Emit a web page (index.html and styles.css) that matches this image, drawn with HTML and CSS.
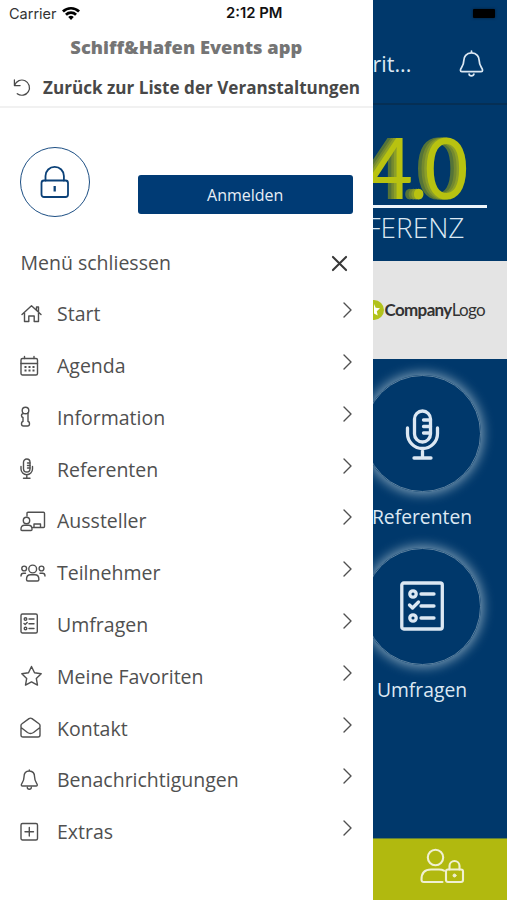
FILE: index.html
```html
<!DOCTYPE html>
<html lang="de">
<head>
<meta charset="utf-8">
<meta name="viewport" content="width=device-width">
<title>Schiff&amp;Hafen Events app</title>
<link rel="stylesheet" href="styles.css">
</head>
<body>
<div class="screen">
  <aside class="drawer">
    <div class="status">
      <span class="carrier">Carrier</span>
      <svg class="wifi" viewBox="0 0 18 14"><path d="M9 14 6.2 11.1a4 4 0 0 1 5.6 0ZM4.9 9.7 3 7.8a8.6 8.6 0 0 1 12 0l-1.900 1.900a5.900 5.900 0 0 0-8.200 0ZM1.900 6.500 0 4.600a12.900 12.900 0 0 1 18 0l-1.900 1.900a10.200 10.200 0 0 0-14.200 0Z"/></svg>
      <span class="time">2:12 PM</span>
    </div>
    <header class="head">
      <h1 class="title"><span>Schiff&amp;Hafen Events app</span></h1>
      <div class="back">
        <svg class="icon back-icon" viewBox="0 0 20 20"><path d="M2 2v6h6M2.300 7.500A8 8 0 1 1 5 16.500"/></svg>
        <span>Zurück zur Liste der Veranstaltungen</span>
      </div>
    </header>
    <section class="login">
      <div class="avatar"><svg class="icon" viewBox="0 0 30 34"><rect x="1.500" y="15.500" width="26.500" height="16.500" rx="2.500"/><path d="M5.500 15.500v-4.500a9.200 9.200 0 0 1 18.400 0v4.500"/><path class="keyhole" d="M14.700 21v5.500"/></svg></div>
      <button class="button">Anmelden</button>
    </section>
    <div class="close-row"><span>Menü schliessen</span><svg class="icon" viewBox="0 0 16 16"><path d="m1 1 14 14M15 1 1 15"/></svg></div>
    <nav class="menu">
      <a class="item"><svg class="icon" viewBox="0 0 26 24"><path d="m2 12.500 9.500-8.700 9.500 8.700M4.500 11v8.500h4.300V14h5.400v5.500h4.300V11M16.500 7.800V5h2v4.700"/></svg><span>Start</span><svg class="chev" viewBox="0 0 9 16"><path d="m1 1 7 7-7 7"/></svg></a>
      <a class="item"><svg class="icon" viewBox="0 0 26 24"><rect x="1" y="4.500" width="16.500" height="16.500" rx="1.500"/><path d="M1 9.500h16.500M4.500 2.500v2M14 2.500v2"/><path class="dots" d="M4.500 13h2m2 0h2m2 0h2m-10 3.500h2m2 0h2m2 0h2"/></svg><span>Agenda</span><svg class="chev" viewBox="0 0 9 16"><path d="m1 1 7 7-7 7"/></svg></a>
      <a class="item"><svg class="icon" viewBox="0 0 26 24"><circle cx="5.500" cy="5.500" r="3.300"/><path d="M3 8.800q-1.500 0-1.500 1.800T3 12.500v4q-1.500 0-1.500 2.200 0 2.300 2 2.300H7.500q2 0 2-2.300 0-2.200-1.500-2.200V8"/></svg><span>Information</span><svg class="chev" viewBox="0 0 9 16"><path d="m1 1 7 7-7 7"/></svg></a>
      <a class="item"><svg class="icon" viewBox="0 0 26 24"><rect x="3.500" y="2" width="6.500" height="13" rx="3.250"/><path d="M1 9.500V12a5.700 5.700 0 0 0 11.500 0V9.500M6.800 17.700v3.500M3.500 21.300h6.500M7.500 6H10M7.500 8.500H10M7.500 11H10"/></svg><span>Referenten</span><svg class="chev" viewBox="0 0 9 16"><path d="m1 1 7 7-7 7"/></svg></a>
      <a class="item"><svg class="icon" viewBox="0 0 26 24"><circle cx="6.500" cy="11.500" r="3.200"/><path d="M7 7V4.300q0-1 1-1h15.500q1 0 1 1v13.200q0 1-1 1H13M14 18v-3h6.500v3M1 20q0-3.700 3.500-3.700h4q3.500 0 3.500 3.700v.500q0 1-1 1H2q-1 0-1-1Z"/></svg><span>Aussteller</span><svg class="chev" viewBox="0 0 9 16"><path d="m1 1 7 7-7 7"/></svg></a>
      <a class="item"><svg class="icon" viewBox="0 0 26 24"><circle cx="12.700" cy="8" r="3.900"/><circle cx="4.200" cy="7.500" r="2.400"/><circle cx="21.500" cy="7.500" r="2.400"/><path d="M6.500 18.500q0-4.700 4-4.700h4.400q4 0 4 4.700 0 1.500-1.500 1.500H8q-1.500 0-1.500-1.500ZM1 15q0-2.700 2.500-2.700h2M25 15q0-2.700-2.500-2.700h-2.500"/></svg><span>Teilnehmer</span><svg class="chev" viewBox="0 0 9 16"><path d="m1 1 7 7-7 7"/></svg></a>
      <a class="item"><svg class="icon" viewBox="0 0 26 24"><rect x="1" y="2" width="16.300" height="19" rx="1.500"/><circle cx="5.500" cy="7" r="1.300"/><circle cx="5.500" cy="16.500" r="1.300"/><path d="m4 11.500 1.200 1 2-2M9 7h5M9 11.700h5M9 16.500h5"/></svg><span>Umfragen</span><svg class="chev" viewBox="0 0 9 16"><path d="m1 1 7 7-7 7"/></svg></a>
      <a class="item"><svg class="icon" viewBox="0 0 26 24"><path d="m11.500 2.500 3 6.200 6.700 1-4.900 4.700 1.200 6.700-6-3.200-6 3.200 1.200-6.700-4.900-4.700 6.700-1Z"/></svg><span>Meine Favoriten</span><svg class="chev" viewBox="0 0 9 16"><path d="m1 1 7 7-7 7"/></svg></a>
      <a class="item"><svg class="icon" viewBox="0 0 26 24"><path d="M1 9.500q0-1 1-1.700L9 2.600q1.500-1 3 0l7 5.200q1 .700 1 1.700v9.500q0 2-2 2H3q-2 0-2-2ZM1 11.500l6.500 5q3 2 6 0l6.500-5"/></svg><span>Kontakt</span><svg class="chev" viewBox="0 0 9 16"><path d="m1 1 7 7-7 7"/></svg></a>
      <a class="item"><svg class="icon" viewBox="0 0 26 24"><path d="M9.300 2v1M9.300 3C5.500 3 4 6 4 9c0 5-2.700 6-2.700 8q0 1 1 1h14q1 0 1-1c0-2-2.700-3-2.700-8 0-3-1.500-6-5.300-6ZM7.300 19.500a2 1.700 0 0 0 4 0"/></svg><span>Benachrichtigungen</span><svg class="chev" viewBox="0 0 9 16"><path d="m1 1 7 7-7 7"/></svg></a>
      <a class="item"><svg class="icon" viewBox="0 0 26 24"><rect x="1" y="3.500" width="16.500" height="16.500" rx="1.500"/><path d="M9.300 7.500v8.500M5 11.700h8.500"/></svg><span>Extras</span><svg class="chev" viewBox="0 0 9 16"><path d="m1 1 7 7-7 7"/></svg></a>
    </nav>
  </aside>
  <main class="page">
    <div class="topbar">
      <div class="battery"></div>
      <div class="topline"><span class="pagename">rit...</span><svg class="icon bell" viewBox="0 0 26 28"><path d="M13 1v2M13 3C7.500 3 5 7 5 11c0 6-3.500 7.500-3.500 10q0 1.500 1.500 1.500h20q1.500 0 1.500-1.500c0-2.500-3.500-4-3.500-10 0-4-2.500-8-8-8ZM10.500 25a2.500 1.800 0 0 0 5 0"/></svg></div>
    </div>
    <div class="hero"><div class="number">4.0</div><div class="rule"></div><div class="conf"><span>FERENZ</span></div></div>
    <div class="sponsor"><svg class="badge" viewBox="0 0 11 20"><circle cx="1" cy="10" r="10"/><path d="m1 4 1.700 3.800 4.300.500-3.200 2.900.900 4.300L1 13.400Z"/></svg><span class="company"><b>Company</b>Logo</span></div>
    <div class="tiles">
      <div class="tile"><div class="disc"><svg class="icon" viewBox="0 0 44 52"><rect x="14.500" y="3" width="16" height="31" rx="8"/><path d="M7.500 20v5.500a15 15 0 0 0 30 0V20M22.500 41v9M14 50h17M23.500 12h7M23.500 18.500h7M23.500 25h7"/></svg></div><span class="label">Referenten</span></div>
      <div class="tile"><div class="disc"><svg class="icon" viewBox="0 0 44 52"><rect x="1.800" y="3" width="40.500" height="46" rx="2"/><circle cx="13" cy="14" r="3.200"/><circle cx="13" cy="38" r="3.200"/><path d="m9.500 25 3 3 6-6M21 14h13M21 26h13M21 38h13"/></svg></div><span class="label">Umfragen</span></div>
    </div>
    <div class="footer"><svg class="icon" viewBox="0 0 44 36"><circle cx="15.500" cy="9.500" r="7.700"/><path d="M22.500 34H4q-2.500 0-2.500-2.500 0-10 9.500-10h8q3 0 5 1.200"/><rect x="26" y="21.500" width="17" height="12.500" rx="2"/><path d="M29.500 21.500V18a5 5 0 0 1 10 0v3.500"/><circle class="spot" cx="34.500" cy="27.500" r="1.500"/></svg></div>
  </main>
</div>
</body>
</html>
```
FILE: styles.css
```css
* { box-sizing: border-box; }
body { margin: 0; font-family: "Open Sans", sans-serif; color: #505050; }
svg { display: block; flex: none; overflow: visible; }
.icon, .chev { fill: none; stroke: currentColor; stroke-linecap: round; stroke-linejoin: round; }
.screen { display: grid; grid-template-columns: 372.5px 134.5px; height: 900px; overflow: hidden; }
.drawer { background: #fff; min-width: 0; }
.status { display: flex; align-items: center; height: 28px; padding: 0 0 2px 9px; font: 14.5px Inter, sans-serif; color: #333; }
.carrier { width: 53px; }
.wifi { width: 18px; height: 14px; fill: #000; margin-top: -1px; }
.time { margin-left: 146px; color: #111; font-weight: 600; font-size: 14.8px; white-space: nowrap; }
.head { height: 80px; border-bottom: 2px solid #f1f1f1; white-space: nowrap; }
.title { margin: 0; height: 37px; text-align: center; font-size: 18.3px; line-height: 37px; font-weight: 800; color: #757575; }
.back { display: flex; align-items: center; height: 44px; padding-left: 12px; font-size: 17.1px; font-weight: 700; gap: 11px; color: #484848; }
.back-icon { width: 20px; height: 19px; stroke-width: 1.3; }
.login { display: flex; height: 125px; padding: 39px 19.5px 0 20px; justify-content: space-between; }
.avatar { display: grid; place-items: center; width: 70px; height: 70px; border: 1.5px solid #1d4f84; border-radius: 50%; color: #0b4178; }
.avatar svg { width: 30px; height: 34px; stroke-width: 1.8; }
.avatar .keyhole { stroke-width: 2.3; stroke-linecap: butt; }
.button { width: 215.5px; height: 39px; margin-top: 28px; border: 0; border-radius: 3px; background: #003b75; color: #e7eef6; font: 16px "Open Sans", sans-serif; }
.close-row { display: flex; align-items: center; justify-content: space-between; height: 55px; padding: 5px 25.5px 0 20.5px; font-size: 19.5px; }
.close-row span { margin-top: -2px; }
.close-row svg { width: 15px; height: 15px; stroke-width: 2.2; color: #383838; }
.menu { display: grid; grid-auto-rows: 51.77px; }
.item { display: flex; align-items: center; padding: 0 21px 0 20px; font-size: 19.5px; white-space: nowrap; }
.item .icon { width: 26px; height: 24px; margin-right: 11px; stroke-width: 1.4; }
.item .dots { stroke-width: 2; stroke-linecap: butt; }
.chev { width: 9px; height: 16px; margin: -7px 0 0 auto; stroke-width: 1.4; }
.page { display: flex; flex-direction: column; background: #00386b; color: #dce8f3; min-width: 0; overflow: hidden; }
.topbar { height: 105px; border-bottom: 2px solid #052f55; }
.battery { width: 22px; height: 9px; margin: 9px 0 0 100px; background: #000; border-radius: 1px; box-shadow: 0 0 3px #001d38; }
.topline { display: flex; height: 91px; align-items: center; padding-right: 23px; justify-content: space-between; font-size: 21.5px; }
.bell { width: 25px; height: 27px; stroke-width: 1.8; }
.hero { height: 156px; }
.number { height: 100px; padding-top: 11px; margin-left: -4px; font: 86px/100px Lato, sans-serif; letter-spacing: -3.5px; transform: scaleX(.88); transform-origin: left; color: #b8c210; text-shadow: -3px 0 #8c9f28, -6px 0 #74892f, -10px 0 #557438; white-space: nowrap; }
.rule { width: 114px; height: 3px; background: #eef5fb; }
.conf { margin-left: -6px; font: 300 28px/39px "Open Sans", sans-serif; }
.sponsor { display: flex; align-items: center; height: 98px; background: #e4e4e4; color: #333; }
.badge { width: 11px; height: 20px; fill: #b1c21b; overflow: hidden; }
.badge path { fill: #fff; }
.company { margin: -2px 0 0 1px; font: 17px Lato, sans-serif; letter-spacing: -.65px; white-space: nowrap; }
.tiles { display: flex; flex-direction: column; height: 479px; padding-top: 16px; }
.tile { display: flex; flex-direction: column; align-items: center; width: 117px; height: 172.5px; margin-left: -9px; white-space: nowrap; }
.disc { display: grid; place-items: center; width: 117px; height: 117px; flex: none; border: 1px solid #5c819f; border-radius: 50%; box-shadow: 0 0 12px 2px #7f9fb6; }
.disc svg { width: 44px; height: 52px; stroke-width: 3.3; }
.label { margin-top: 11px; font-size: 19.3px; line-height: 27px; }
.footer { display: grid; justify-content: center; padding-top: 9px; height: 62px; width: 139px; background: #b1b90f; color: #f0f0d1; border-top: 1px solid #60803c; }
.footer svg { width: 44px; height: 36px; stroke-width: 2.1; }
.spot { fill: currentColor; stroke-width: 1; }
```
